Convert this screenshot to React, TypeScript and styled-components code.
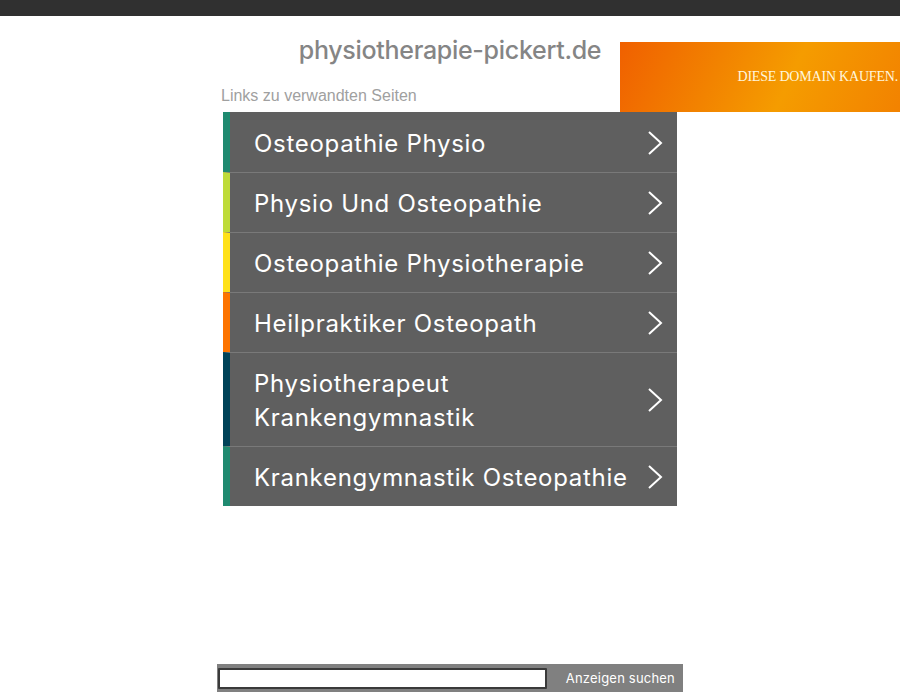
import React from "react";
import styled, { createGlobalStyle } from "styled-components";

const Global = createGlobalStyle`
  html, body { margin: 0; padding: 0; background: #fff; }
  body { font-family: "Inter", "Liberation Sans", sans-serif; overflow: hidden; }
`;

const Page = styled.div`
  position: relative;
  width: 900px;
  height: 700px;
  display: flex;
  flex-direction: column;
`;

const TopBar = styled.div`
  height: 16px;
  background: #303030;
  flex-shrink: 0;
`;

const Column = styled.main`
  width: 466px;
  margin: 0 auto;
  display: flex;
  flex-direction: column;
  flex: 1;
`;

const Title = styled.h1`
  margin: 19px 0 0;
  text-align: center;
  font-family: "Inter", sans-serif;
  font-weight: 500;
  font-size: 25px;
  line-height: 30px;
  letter-spacing: -0.3px;
  color: #858585;
`;

const Caption = styled.div`
  margin: 21px 0 0 4px;
  font-family: "Liberation Sans", Arial, sans-serif;
  font-size: 16px;
  line-height: 20px;
  color: #a0a0a0;
`;

const List = styled.ul`
  list-style: none;
  margin: 6px 6px 0;
  padding: 0;
  display: flex;
  flex-direction: column;
`;

const Row = styled.li<{ $accent: string; $first?: boolean }>`
  display: flex;
  align-items: center;
  background: #5f5f5f;
  border-left: 7px solid ${(p) => p.$accent};
  border-top: ${(p) => (p.$first ? "none" : "1px solid #797979")};
  padding: ${(p) => (p.$first ? "15px" : "14px")} 14px 11px 24px;
  color: #fff;
  cursor: pointer;
`;

const Label = styled.span`
  flex: 1;
  font-family: "Inter", sans-serif;
  font-size: 24px;
  line-height: 34px;
  letter-spacing: 0.7px;
  font-weight: 400;
`;

const Chevron = styled.svg`
  width: 16px;
  height: 24px;
  flex-shrink: 0;
  margin-bottom: 2px;
`;

const Footer = styled.form`
  margin-top: auto;
  margin-bottom: 8px;
  height: 28px;
  background: #808080;
  display: flex;
  align-items: center;
  padding: 0 8px 0 1px;
  gap: 18px;
`;

const SearchInput = styled.input`
  width: 325px;
  height: 17px;
  border: 2px solid #3a3a3a;
  border-radius: 1px;
  background: #fff;
  padding: 0;
  margin: 0;
`;

const SearchButton = styled.button`
  border: none;
  background: transparent;
  color: #fff;
  font-family: "Inter", sans-serif;
  font-size: 13px;
  letter-spacing: 0.2px;
  padding: 0;
  margin-left: auto;
`;

const Banner = styled.a`
  position: absolute;
  top: 42px;
  right: 0;
  width: 280px;
  height: 70px;
  background: linear-gradient(115deg, #f06000 0%, #f28300 35%, #f59c00 60%, #f28200 100%);
  display: flex;
  align-items: center;
  justify-content: flex-end;
  padding-right: 2px;
  box-sizing: border-box;
  overflow: hidden;
  text-decoration: none;
`;

const BannerText = styled.span`
  font-family: "Liberation Serif", serif;
  font-size: 14px;
  letter-spacing: -0.2px;
  color: #fff6dc;
  white-space: nowrap;
  margin-top: 0px;
`;

const items: { label: React.ReactNode; accent: string }[] = [
  { label: "Osteopathie Physio", accent: "#1f8a70" },
  { label: "Physio Und Osteopathie", accent: "#bedb39" },
  { label: "Osteopathie Physiotherapie", accent: "#ffe11a" },
  { label: "Heilpraktiker Osteopath", accent: "#fd7400" },
  { label: <>Physiotherapeut<br />Krankengymnastik</>, accent: "#004358" },
  { label: "Krankengymnastik Osteopathie", accent: "#1f8a70" },
];

export default function App() {
  return (
    <>
      <Global />
      <Page>
        <TopBar />
        <Column>
          <Title>physiotherapie-pickert.de</Title>
          <Caption>Links zu verwandten Seiten</Caption>
          <List>
            {items.map((it, i) => (
              <Row key={i} $accent={it.accent} $first={i === 0}>
                <Label>{it.label}</Label>
                <Chevron viewBox="0 0 16 24">
                  <path d="M2 1 L14 12 L2 23" fill="none" stroke="#fff" strokeWidth="2" />
                </Chevron>
              </Row>
            ))}
          </List>
          <Footer onSubmit={(e) => e.preventDefault()}>
            <SearchInput type="text" />
            <SearchButton type="submit">Anzeigen suchen</SearchButton>
          </Footer>
        </Column>
        <Banner href="#">
          <BannerText>DIESE DOMAIN KAUFEN.</BannerText>
        </Banner>
      </Page>
    </>
  );
}
